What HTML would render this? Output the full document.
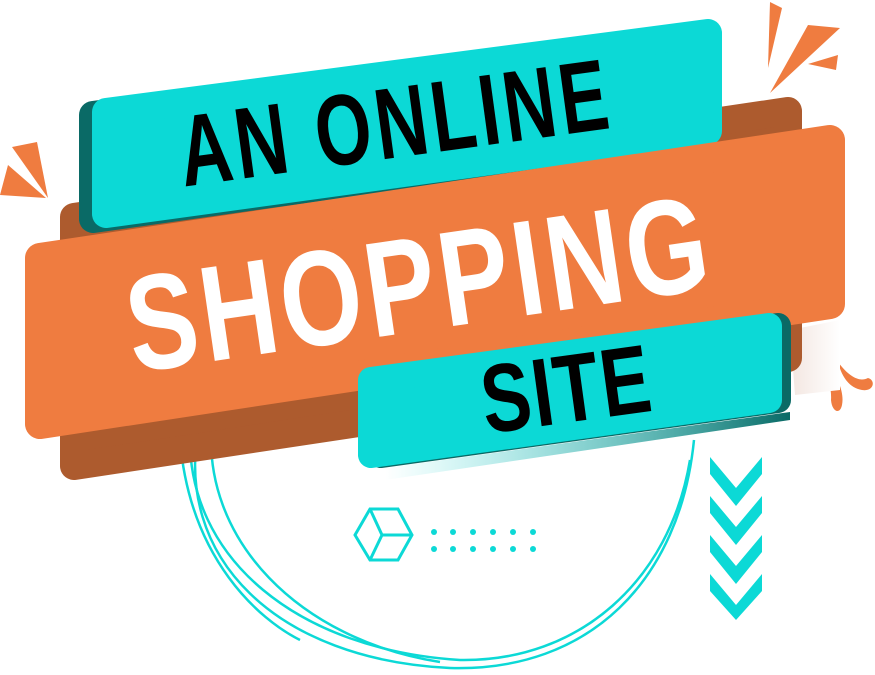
<!DOCTYPE html>
<html><head><meta charset="utf-8"><style>
html,body{margin:0;padding:0;background:#fff;width:875px;height:675px;overflow:hidden}
svg{display:block}
text{font-family:"Liberation Sans",sans-serif;font-weight:bold}
</style></head><body>
<svg width="875" height="675" viewBox="0 0 875 675">
<defs>
<linearGradient id="g" x1="0" x2="1" y1="0" y2="0">
<stop offset="0" stop-color="#0cd9d6" stop-opacity="0"/>
<stop offset="1" stop-color="#0a6a66"/>
</linearGradient>
<linearGradient id="sh" x1="0" x2="1"><stop offset="0" stop-color="#f3e6e0"/><stop offset="1" stop-color="#fff"/></linearGradient>
</defs>
<g fill="none" stroke="#0cd9d6" stroke-width="2.5">
<path d="M200 420 C170 560 280 660 450 668 C590 672 680 580 694 440"/>
<path d="M190 430 C185 560 300 650 460 660 C580 662 670 580 690 460"/>
<path d="M212 420 C200 540 300 640 440 662"/>
<path d="M180 440 C190 560 260 620 300 640"/>
</g>
<g fill="#ef7c40">
<polygon points="770,2 782,8 768,68"/>
<polygon points="808,25 840,28 770,93"/>
<polygon points="808,64 838,55 836,70"/>
<polygon points="12,147 37,142 48,198"/>
<polygon points="8,165 46,198 0,195"/>
<path d="M815 348 C835 370 845 390 842 405 C840 415 832 412 831 400 C832 385 825 365 815 348Z"/>
<path d="M838 362 C850 378 860 382 868 378 C876 380 874 392 862 390 C850 388 842 378 838 362Z"/>
</g>
<polygon points="790,330 840,320 840,390 795,395" fill="url(#sh)"/>
<polygon points="74,217 788,111 788,358 74,466" fill="#ad5b2e" stroke="#ad5b2e" stroke-width="28" stroke-linejoin="round"/>
<polygon points="93,115 695,36 695,134 93,219" fill="#0a6a66" stroke="#0a6a66" stroke-width="28" stroke-linejoin="round"/>
<polygon points="106,112 708,33 708,131 106,214" fill="#0cd9d6" stroke="#0cd9d6" stroke-width="28" stroke-linejoin="round"/>
<polygon points="40,258 830,140 830,304 40,424" fill="#ef7c40" stroke="#ef7c40" stroke-width="30" stroke-linejoin="round"/>
<polygon points="385,468 790,412 790,420 385,480" fill="url(#g)"/>
<polygon points="381,380 778,326 778,400 381,455" fill="#0a6a66" stroke="#0a6a66" stroke-width="26" stroke-linejoin="round"/>
<polygon points="371,380 769,326 769,400 371,455" fill="#0cd9d6" stroke="#0cd9d6" stroke-width="26" stroke-linejoin="round"/>
<text x="0" y="0" font-size="84" fill="#000" text-anchor="middle" transform="translate(400,157) rotate(-7.8) scale(0.86,1.2)" letter-spacing="5">AN  ONLINE</text>
<text x="0" y="0" font-size="118" fill="#fff" text-anchor="middle" transform="translate(426,330) rotate(-8.3) scale(0.89,1.15)" letter-spacing="5">SHOPPING</text>
<text x="0" y="0" font-size="84" fill="#000" text-anchor="middle" transform="translate(571,422) rotate(-7.8) scale(0.88,1.15)" letter-spacing="2">SITE</text>
<g fill="none" stroke="#0cd9d6" stroke-width="3">
<polygon points="370,509 398,509 412,535 398,560 370,560 355,535"/>
<polyline points="370,509 382,535 370,560"/>
<line x1="382" y1="535" x2="412" y2="535"/>
</g>
<g fill="#0cd9d6">
<circle cx="434" cy="532" r="3"/><circle cx="453" cy="532" r="3"/><circle cx="473" cy="532" r="3"/><circle cx="493" cy="532" r="3"/><circle cx="513" cy="532" r="3"/><circle cx="533" cy="532" r="3"/>
<circle cx="434" cy="549" r="3"/><circle cx="453" cy="549" r="3"/><circle cx="473" cy="549" r="3"/><circle cx="493" cy="549" r="3"/><circle cx="513" cy="549" r="3"/><circle cx="533" cy="549" r="3"/>
<polygon points="710,457 736,488 762,457 762,474 736,506 710,474"/>
<polygon points="710,496 736,527 762,496 762,513 736,545 710,513"/>
<polygon points="710,535 736,566 762,535 762,552 736,584 710,552"/>
<polygon points="710,574 736,605 762,574 762,591 736,620 710,591"/>
</g>
</svg>
</body></html>
